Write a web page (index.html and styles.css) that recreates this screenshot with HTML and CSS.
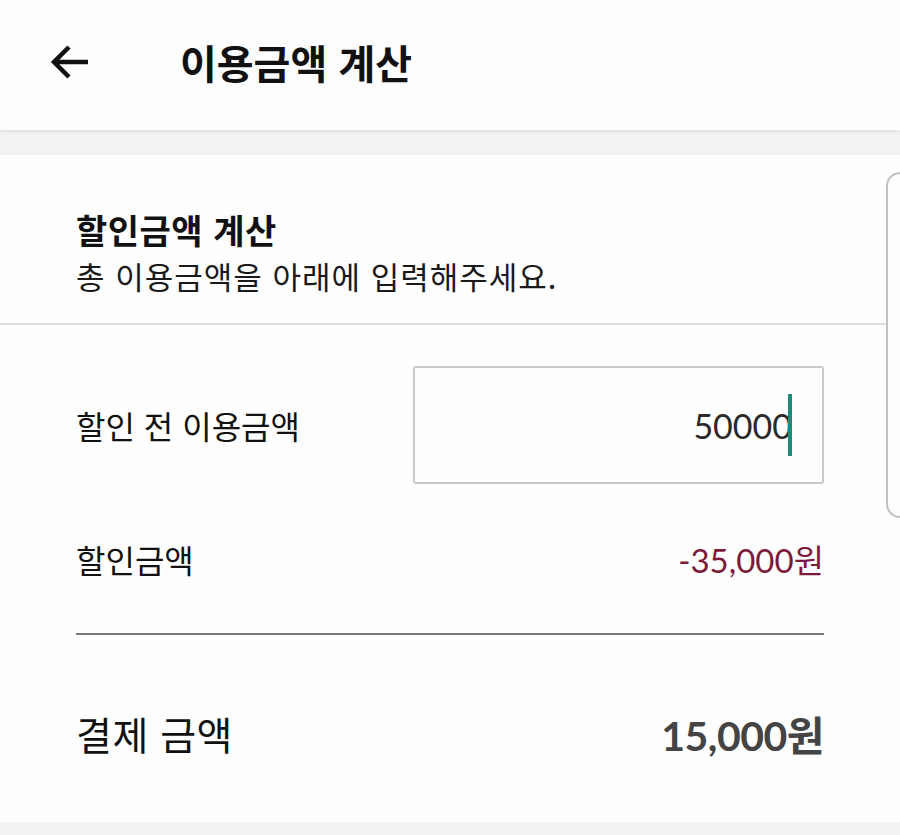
FILE: index.html
```html
<!DOCTYPE html>
<html lang="ko">
<head>
    <meta charset="UTF-8">
    <meta name="viewport" content="width=device-width, initial-scale=1.0">
    <title>이용금액 계산</title>
    <link rel="stylesheet" href="styles.css">
</head>
<body>
    <header class="topbar">
        <button class="back-btn" aria-label="뒤로">
            <svg width="44" height="44" viewBox="0 0 44 44">
                <path d="M40 22 H6 M21 7 L6 22 L21 37" fill="none" stroke="#111" stroke-width="4.5" stroke-linecap="butt" stroke-linejoin="miter"/>
            </svg>
        </button>
        <h1 class="title">이용금액 계산</h1>
    </header>

    <main class="card">
        <section class="intro">
            <h2>할인금액 계산</h2>
            <p>총 이용금액을 아래에 입력해주세요.</p>
        </section>

        <section class="calc">
            <div class="row row-input">
                <span class="label">할인 전 이용금액</span>
                <div class="amount-box">
                    <span class="typed">50000</span><span class="caret"></span>
                </div>
            </div>
            <div class="row row-discount">
                <span class="label">할인금액</span>
                <span class="discount num">-35,000<span class="won">원</span></span>
            </div>
            <div class="rule"></div>
            <div class="row row-total">
                <span class="label total-label">결제 금액</span>
                <span class="total num">15,000<span class="won">원</span></span>
            </div>
        </section>

        <div class="side-handle"></div>
    </main>
</body>
</html>
```

FILE: styles.css
```css
body {
    margin: 0;
    background: #f3f3f3;
    font-family: "Noto Sans CJK KR", "Noto Sans", sans-serif;
    color: #111;
    height: 835px;
    overflow: hidden;
}
.topbar {
    height: 130px;
    background: #fdfdfd;
    display: flex;
    align-items: center;
    box-shadow: 0 2px 4px rgba(0, 0, 0, 0.08);
    position: relative;
}
.back-btn {
    border: none;
    background: none;
    padding: 0;
    margin-left: 48px;
    margin-top: -6px;
    width: 44px;
    height: 44px;
}
.title {
    margin: -6px 0 0 88px;
    font-size: 40px;
    line-height: 50px;
    font-weight: 700;
}
.card {
    margin-top: 25px;
    height: 667px;
    background: #fefefe;
    position: relative;
}
.intro {
    padding: 54px 76px 28px;
    border-bottom: 2px solid #dedede;
}
.intro h2 {
    margin: 0;
    font-size: 34px;
    line-height: 42px;
    font-weight: 700;
    letter-spacing: 0.5px;
}
.intro p {
    margin: 6px 0 0;
    font-size: 31px;
    line-height: 38px;
    letter-spacing: 1px;
    color: #1a1a1a;
}
.calc {
    padding: 0 76px;
}
.row {
    display: flex;
    justify-content: space-between;
    align-items: center;
}
.label {
    font-size: 32px;
}
.row-input {
    padding-top: 41px;
}
.amount-box {
    box-sizing: border-box;
    width: 411px;
    height: 118px;
    border: 2px solid #c9c9c9;
    border-radius: 3px;
    display: flex;
    align-items: center;
    justify-content: flex-end;
    padding-right: 30px;
}
.typed {
    font-family: Lato, "Noto Sans", sans-serif;
    font-size: 34px;
    color: #2a2a2a;
    margin-right: -4px;
}
.caret {
    width: 4px;
    height: 62px;
    background: #1c8c78;
}
.row-discount {
    height: 80px;
    margin-top: 35px;
}
.num {
    font-family: Lato, "Noto Sans", sans-serif;
}
.won {
    font-family: "Noto Sans CJK KR", sans-serif;
}
.discount {
    font-size: 33px;
    color: #7d1a3a;
}
.rule {
    height: 2px;
    background: #7a7a7a;
    margin-top: 34px;
}
.row-total {
    height: 196px;
}
.total-label {
    font-size: 39px;
    letter-spacing: 0.5px;
}
.total {
    font-size: 41px;
    font-weight: 700;
    color: #444;
    letter-spacing: -0.5px;
}
.side-handle {
    position: absolute;
    right: -20px;
    top: 17px;
    width: 30px;
    height: 342px;
    border: 2px solid #c2c2c2;
    border-radius: 14px;
    background: #fdfdfd;
}
```
